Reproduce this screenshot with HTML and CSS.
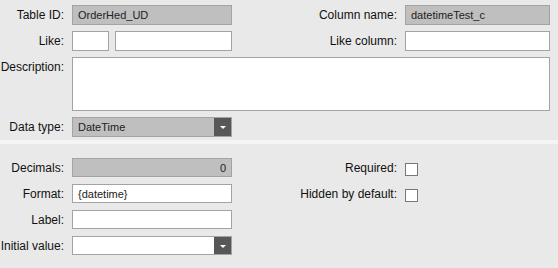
FILE: index.html
```html
<!DOCTYPE html>
<html>
<head>
<meta charset="utf-8">
<link rel="stylesheet" href="styles.css">
</head>
<body>
<div class="form">
  <section class="sec sec-top">
    <div class="lbl"><span>Table ID:</span></div>
    <div class="field ro">OrderHed_UD</div>
    <div class="lbl"><span>Column name:</span></div>
    <div class="field ro">datetimeTest_c</div>

    <div class="lbl"><span>Like:</span></div>
    <div class="pair"><div class="field small"></div><div class="field grow"></div></div>
    <div class="lbl"><span>Like column:</span></div>
    <div class="field"></div>

    <div class="lbl lbl-top"><span>Description:</span></div>
    <div class="field area"></div>

    <div class="lbl"><span>Data type:</span></div>
    <div class="field ro select"><span class="val">DateTime</span><span class="btn"><span class="tri"></span></span></div>
  </section>
  <div class="sep"></div>
  <section class="sec sec-bottom">
    <div class="lbl"><span>Decimals:</span></div>
    <div class="field ro num">0</div>
    <div class="lbl"><span>Required:</span></div>
    <div class="chk-cell"><span class="chk"></span></div>

    <div class="lbl"><span>Format:</span></div>
    <div class="field">{datetime}</div>
    <div class="lbl"><span>Hidden by default:</span></div>
    <div class="chk-cell"><span class="chk"></span></div>

    <div class="lbl"><span>Label:</span></div>
    <div class="field"></div>
    <div></div><div></div>

    <div class="lbl"><span>Initial value:</span></div>
    <div class="field select"><span class="val"></span><span class="btn"><span class="tri"></span></span></div>
  </section>
</div>
</body>
</html>
```
FILE: styles.css
```css
html, body {
  margin: 0;
  padding: 0;
  background: #e9e9e9;
  font-family: "Liberation Sans", Arial, sans-serif;
  font-size: 12px;
  color: #111;
  overflow: hidden;
}
.form {
  width: 558px;
  height: 268px;
}
.sec {
  display: grid;
  grid-template-columns: 64px 160px 1fr 145px;
  column-gap: 8px;
  padding-right: 8px;
}
.sec-top {
  grid-template-rows: 20px 20px 54px 20px;
  row-gap: 6px;
  padding-top: 5px;
  height: 140px;
  box-sizing: border-box;
}
.sec-bottom {
  grid-template-rows: 19px 19px 19px 19px;
  row-gap: 7px;
  padding-top: 14px;
}
.sep {
  height: 4px;
  background: #f4f4f4;
}
.lbl {
  display: flex;
  align-items: center;
  justify-content: flex-end;
  white-space: nowrap;
  min-width: 0;
}
.lbl-top {
  align-items: flex-start;
  line-height: 20px;
}
.field {
  box-sizing: border-box;
  border: 1px solid #a3a3a3;
  background: #fff;
  font-size: 11px;
  color: #222;
  padding: 0 5px 0 5px;
  display: flex;
  align-items: center;
  white-space: nowrap;
  overflow: hidden;
  min-width: 0;
}
.ro {
  background: #bfbfbf;
}
.num {
  justify-content: flex-end;
}
.pair {
  display: flex;
  gap: 6px;
}
.small {
  width: 37px;
  flex: none;
}
.grow {
  flex: 1;
}
.area {
  grid-column: 2 / 5;
}
.select {
  padding-right: 0;
}
.select .val {
  flex: 1;
}
.btn {
  width: 17px;
  align-self: stretch;
  background: #575757;
  display: flex;
  align-items: center;
  justify-content: center;
}
.tri {
  width: 0;
  height: 0;
  border-left: 3px solid transparent;
  border-right: 3px solid transparent;
  border-top: 3px solid #fff;
  margin-top: 1px;
}
.chk-cell {
  display: flex;
  align-items: center;
}
.chk {
  box-sizing: border-box;
  width: 13px;
  height: 13px;
  border: 1px solid #777;
  background: #fff;
  margin-top: 3px;
}
```
